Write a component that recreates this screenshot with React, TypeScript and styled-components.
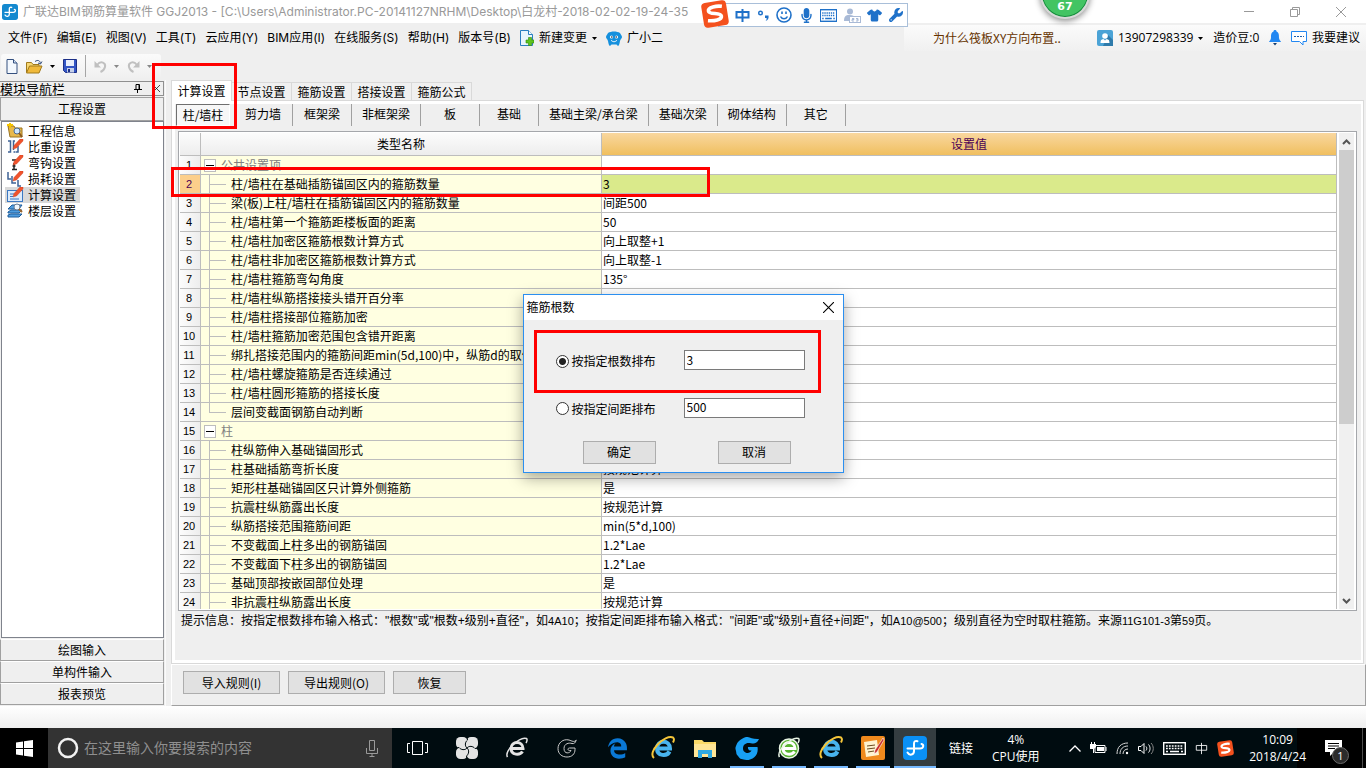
import React, { useState } from "react";
import styled, { createGlobalStyle, css } from "styled-components";
import {
  FaEdgeLegacy,
  FaMicrophone,
  FaShirt,
  FaWrench,
} from "react-icons/fa6";

const song = `"Noto Sans CJK SC", sans-serif`;
const yahei = `"Open Sans", "Noto Sans CJK SC", sans-serif`;
const chrome = `Inter, "Noto Sans CJK SC", sans-serif`;
const arial = `"Liberation Sans", "Noto Sans CJK SC", sans-serif`;

const Global = createGlobalStyle`
  *, *::before, *::after { box-sizing: border-box; }
  html, body { margin: 0; padding: 0; background: #efefef; }
  body { font: 12px/18px ${song}; color: #000; overflow: hidden; }
  button, input { font: inherit; color: inherit; }
  svg { display: block; flex: none; }
`;

const Screen = styled.div`
  position: relative;
  display: flex;
  flex-direction: column;
  height: 100vh;
  min-height: 480px;
  overflow: hidden;
`;

/* ---------- title bar ---------- */

const TitleBar = styled.header`
  display: flex;
  align-items: center;
  gap: 5px;
  height: 23px;
  padding-left: 2px;
  background: #fff;
  color: #999;
  font-family: ${chrome};
`;

const TitleText = styled.h1`
  flex: 1;
  margin: 0;
  font-size: 12px;
  font-weight: 400;
  line-height: 22px;
  white-space: nowrap;
`;

const WindowButton = styled.button`
  display: flex;
  align-items: center;
  justify-content: center;
  width: 46px;
  height: 20px;
  padding: 0;
  border: 0;
  background: none;
`;

const WindowButtons = styled.div`
  display: flex;
  padding-right: 2px;
`;

const ImeBar = styled.div`
  position: absolute;
  top: 3px;
  left: 718px;
  display: flex;
  align-items: center;
  justify-content: space-between;
  width: 190px;
  height: 24px;
  padding: 0 4px 0 16px;
  border: 1px solid #a9bfd9;
  background: #fff;
  color: #1f71c9;
`;

const ImeLogo = styled.div`
  position: absolute;
  top: 0;
  left: 701px;
`;

const Ball = styled.div`
  position: absolute;
  top: -31px;
  left: 1040px;
  display: flex;
  align-items: flex-end;
  justify-content: center;
  width: 50px;
  height: 50px;
  padding-bottom: 2px;
  border: 2px solid #d8d8d8;
  border-radius: 50%;
  background: #43c463;
  box-shadow: inset 0 0 0 1px #14873a, 0 2px 6px rgba(0, 0, 0, 0.45);
  color: #fff;
  font: bold 11px/16px "DejaVu Sans", sans-serif;
`;

/* ---------- menu bar ---------- */

const MenuBar = styled.nav`
  display: flex;
  align-items: center;
  height: 28px;
  padding-top: 2px;
  font-family: ${yahei};
`;

const MenuItems = styled.div`
  display: flex;
  flex: 1;
  align-items: center;
  gap: 9px;
  padding-left: 8px;
  font-family: ${chrome};
`;

const MenuButton = styled.button`
  display: flex;
  align-items: center;
  gap: 5px;
  padding: 0;
  border: 0;
  background: none;
  white-space: nowrap;
`;

const Panel = styled.div`
  display: flex;
  align-items: center;
  height: 26px;
  background: linear-gradient(#fbfbfb, #f0f0f0);
`;

const NoticePanel = styled(Panel)`
  width: 188px;
  padding-left: 29px;
  font-family: ${song};
`;

const NoticeLink = styled.a`
  color: #663300;
  text-decoration: none;
  white-space: nowrap;
`;

const AccountPanel = styled(Panel)`
  gap: 8px;
  width: 274px;
  padding: 0 6px 0 5px;
  justify-content: space-between;
`;

/* ---------- tool bar ---------- */

const ToolBar = styled.div`
  display: flex;
  align-items: flex-start;
  height: 29px;
  padding: 3px 0 0 1px;
`;

const ToolGroup = styled.div`
  display: flex;
  align-items: center;
  gap: 8px;
  width: 160px;
  height: 24px;
  padding-left: 5px;
  border-radius: 3px;
  background: linear-gradient(#fbfbfb, #f0f0f0);
`;

const ToolButton = styled.button`
  display: flex;
  align-items: center;
  gap: 7px;
  padding: 0;
  border: 0;
  background: none;
`;

const ToolDivider = styled.span`
  width: 1px;
  height: 22px;
  background: #a5a5a5;
`;

/* ---------- work area ---------- */

const Work = styled.div`
  display: flex;
  flex: 1;
  min-height: 0;
  gap: 5px;
`;

const Sidebar = styled.aside`
  display: flex;
  flex-direction: column;
  width: 166px;
  padding: 1px 1px 1px 0;
  border-right: 1px solid #fafafa;
`;

const SideHeader = styled.div`
  display: flex;
  align-items: center;
  height: 15px;
  margin-bottom: 1px;
  border: 1px solid #8f8f8f;
  border-left: 0;
  line-height: 13px;
`;

const SideTitle = styled.h2`
  flex: 1;
  margin: 0;
  font-size: 13px;
  font-weight: 400;
  line-height: 13px;
`;

const SideIconButton = styled.button`
  display: flex;
  align-items: center;
  justify-content: flex-end;
  width: 18px;
  height: 13px;
  padding: 0 3px 0 0;
  border: 0;
  background: none;
`;

const SideButton = styled.button<{ $tall?: boolean }>`
  flex: none;
  height: ${(p) => (p.$tall ? 24 : 22)}px;
  padding: 0;
  border: 1px solid #a0a0a0;
  border-top-color: #fff;
  background: #efefef;
  line-height: 18px;
  ${(p) => p.$tall && css`border-top-color: #a0a0a0;`}
`;

const Tree = styled.ul`
  flex: 1;
  margin: 0 0 1px 1px;
  padding: 1px 3px;
  border: 1px solid #7f838c;
  background: #fff;
  list-style: none;
`;

const TreeItem = styled.li`
  display: flex;
  height: 16px;
`;

const TreeButton = styled.button<{ $active?: boolean }>`
  display: flex;
  align-items: center;
  gap: 4px;
  height: 16px;
  padding: 0 4px 0 2px;
  border: 0;
  background: ${(p) => (p.$active ? "#d9d9d9" : "transparent")};
  line-height: 16px;
`;

const Main = styled.main`
  display: flex;
  flex: 1;
  flex-direction: column;
  min-width: 0;
`;

const Tabs = styled.div`
  display: flex;
  align-items: flex-end;
  height: 20px;
`;

const Tab = styled.button<{ $active?: boolean }>`
  width: 60px;
  height: 18px;
  padding: 0;
  border: 1px solid #d9d9d9;
  border-width: 1px 1px 0 0;
  background: #f0f0f0;
  line-height: 17px;
  white-space: nowrap;
  ${(p) =>
    p.$active &&
    css`
      position: relative;
      z-index: 1;
      width: 61px;
      height: 21px;
      margin-bottom: -1px;
      border-left-width: 1px;
      background: #fff;
      line-height: 18px;
    `}
`;

const Page = styled.section`
  display: flex;
  flex: 1;
  min-height: 0;
  margin-right: 2px;
  border: 1px solid #d9d9d9;
`;

const PageInner = styled.div`
  position: relative;
  display: flex;
  flex: 1;
  flex-direction: column;
  min-width: 0;
  padding: 0 4px 0 3px;
  border: 3px solid #fff;
  border-right-width: 2px;
`;

const SubTabs = styled.div`
  display: flex;
  align-items: center;
  height: 22px;
  margin: 0 0 5px -2px;
`;

const SubTab = styled.button<{ $active?: boolean }>`
  min-width: 59px;
  height: 22px;
  padding: 0 10px 2px;
  border: 0;
  border-right: 1px solid #a0a0a0;
  background: none;
  line-height: 18px;
  white-space: nowrap;
  ${(p) =>
    p.$active &&
    css`
      min-width: 54px;
      margin-right: 4px;
      padding: 0 5px;
      border: 1px solid #fff;
      border-top-color: #6f6f6f;
      border-left-color: #6f6f6f;
      background: #f7f7f7;
    `}
`;

const Grid = styled.div`
  display: flex;
  flex: 1;
  min-height: 0;
  gap: 2px;
  padding: 1px 2px 1px 1px;
  border: 1px solid #a5a7ab;
  background: #fff;
  overflow: hidden;
`;

const TableClip = styled.div`
  flex: 1;
  min-width: 0;
  overflow: hidden;
`;

const Table = styled.table`
  width: 100%;
  border-collapse: separate;
  border-spacing: 0;
  table-layout: fixed;
`;

const HeadCell = styled.th<{ $gold?: boolean }>`
  height: 23px;
  padding: 0;
  border: 1px solid #bdbdbd;
  border-width: 0 1px 1px 0;
  background: ${(p) =>
    p.$gold ? "linear-gradient(#f9d79f, #f0bf5f)" : "linear-gradient(#fcfcfc, #ededed)"};
  color: ${(p) => (p.$gold ? "#4b0055" : "#000")};
  font-weight: 400;
  line-height: 20px;
`;

const NumberCell = styled.th<{ $active?: boolean }>`
  height: 19px;
  padding: 0 2px 0 0;
  border: 1px solid #bdbdbd;
  border-width: 0 1px 1px 0;
  background: ${(p) => (p.$active ? "#fccf8b" : "linear-gradient(90deg, #fcfcfc, #ededed)")};
  color: ${(p) => (p.$active ? "#4b0055" : "#000")};
  font-family: ${arial};
  font-size: 11px;
  font-weight: 400;
  line-height: 18px;
`;

const NameCell = styled.td<{ $group?: boolean; $last?: boolean }>`
  position: relative;
  height: 19px;
  padding: 0 0 0 ${(p) => (p.$group ? 3 : 30)}px;
  border: 1px solid #bdbdbd;
  border-width: 0 1px 1px 0;
  background: #ffffe1;
  color: ${(p) => (p.$group ? "#808080" : "#000")};
  line-height: 18px;
  white-space: nowrap;
  overflow: hidden;
  ${(p) =>
    !p.$group &&
    css`
      &::before {
        content: "";
        position: absolute;
        left: 8px;
        top: 0;
        width: 17px;
        height: 10px;
        border-left: 1px solid #bdbdbd;
        border-bottom: 1px solid #bdbdbd;
      }
    `}
  ${(p) =>
    !p.$group &&
    !p.$last &&
    css`
      &::after {
        content: "";
        position: absolute;
        left: 8px;
        top: 0;
        height: 19px;
        border-left: 1px solid #bdbdbd;
      }
    `}
`;

const GroupLine = styled.div`
  display: flex;
  align-items: center;
  gap: 5px;
  height: 18px;
`;

const Toggle = styled.button`
  display: flex;
  align-items: center;
  justify-content: center;
  width: 12px;
  height: 13px;
  padding: 0;
  border: 1px solid #bdbdbd;
  background: #fff;
`;

const ValueCell = styled.td<{ $active?: boolean }>`
  height: 19px;
  padding: 0 0 0 1px;
  border: 1px solid #bdbdbd;
  border-width: 0 1px 1px 0;
  background: ${(p) => (p.$active ? "#daea8b" : "#fff")};
  line-height: 18px;
  white-space: nowrap;
`;

const Scrollbar = styled.div`
  display: flex;
  flex-direction: column;
  width: 15px;
  background: #f0f0f0;
`;

const ScrollArrow = styled.button`
  display: flex;
  align-items: center;
  justify-content: center;
  height: 17px;
  padding: 0;
  border: 0;
  background: none;
`;

const ScrollTrack = styled.div`
  flex: 1;
`;

const ScrollThumb = styled.div`
  height: 62%;
  background: #cdcdcd;
`;

const Hint = styled.p`
  height: 49px;
  margin: 0;
  padding-left: 3px;
  font-family: ${arial};
  line-height: 20px;
  white-space: nowrap;
`;

const HintCode = styled.span`
  font-size: 11px;
`;

const Actions = styled.div`
  display: flex;
  gap: 8px;
  height: 42px;
  padding: 6px 0 0 11px;
  border: 1px solid #a0a0a0;
  border-top-color: #fff;
  border-left-color: #fff;
`;

const PushButton = styled.button<{ $wide?: boolean }>`
  width: ${(p) => (p.$wide ? 97 : 73)}px;
  height: 23px;
  padding: 0;
  border: 1px solid #adadad;
  background: #e1e1e1;
  line-height: 20px;
`;

const DesktopStrip = styled.div`
  height: 22px;
  background: linear-gradient(#fff, #efefef);
`;

/* ---------- red call-outs ---------- */

const Callout = styled.div`
  position: absolute;
  z-index: 2;
  border: 3px solid #f00;
  pointer-events: none;
`;

const TabCallout = styled(Callout)`
  top: 63px;
  left: 152px;
  width: 85px;
  height: 66px;
`;

const RowCallout = styled(Callout)`
  top: 63px;
  left: -4px;
  width: 539px;
  height: 30px;
`;

/* ---------- dialog ---------- */

const DialogLayer = styled.div`
  position: absolute;
  inset: 0;
  z-index: 3;
  display: flex;
  align-items: center;
  justify-content: center;
  padding-bottom: 2px;
`;

const Dialog = styled.form`
  width: 321px;
  padding-bottom: 8px;
  border: 1px solid #2b8ff0;
  background: #efefef;
  box-shadow: 0 5px 14px rgba(0, 0, 0, 0.35);
`;

const DialogTitle = styled.div`
  display: flex;
  align-items: center;
  justify-content: space-between;
  height: 25px;
  margin-bottom: 10px;
  padding: 0 9px 0 3px;
  background: #fff;
`;

const CloseButton = styled.button`
  padding: 0;
  border: 0;
  background: none;
`;

const Option = styled.div<{ $marked?: boolean }>`
  display: flex;
  align-items: center;
  height: ${(p) => (p.$marked ? 63 : 32)}px;
  margin: 0 0 0 10px;
  width: 287px;
  padding-left: 19px;
  border: 3px solid ${(p) => (p.$marked ? "#f00" : "transparent")};
`;

const OptionLabel = styled.label`
  display: flex;
  align-items: center;
  gap: 3px;
  width: 128px;
`;

const Radio = styled.input`
  appearance: none;
  width: 13px;
  height: 13px;
  margin: 0;
  border: 1px solid #333;
  border-radius: 50%;
  background: #fff;
  &:checked {
    background: radial-gradient(circle, #222 0 3px, #fff 4px);
  }
`;

const Field = styled.input`
  width: 121px;
  height: 20px;
  margin-bottom: 2px;
  padding: 0 2px 2px;
  border: 1px solid #7a7a7a;
  border-radius: 0;
  background: #fff;
  outline: 0;
`;

const DialogButtons = styled.div`
  display: flex;
  gap: 62px;
  padding: 16px 0 0 59px;
`;

/* ---------- task bar ---------- */

const TaskBar = styled.footer`
  display: flex;
  height: 40px;
  background: linear-gradient(to left, #000 69px, #000c10 69px);
  color: #fff;
  font-family: ${yahei};
`;

const StartButton = styled.button`
  display: flex;
  align-items: center;
  justify-content: center;
  width: 48px;
  padding: 0;
  border: 0;
  background: #000;
`;

const SearchBox = styled.label`
  display: flex;
  align-items: center;
  gap: 5px;
  width: 344px;
  padding: 0 14px 0 9px;
  background: #333;
`;

const SearchInput = styled.input`
  flex: 1;
  min-width: 0;
  padding: 0;
  border: 0;
  background: none;
  outline: 0;
  font-size: 14px;
  line-height: 20px;
  &::placeholder {
    color: #8f8f8f;
    opacity: 1;
  }
`;

const TaskButton = styled.button<{ $size?: "wide"; $state?: "open" | "active" }>`
  display: flex;
  align-items: center;
  justify-content: center;
  width: ${(p) => (p.$size ? 50 : 42)}px;
  padding: 0;
  border: 0;
  background: ${(p) => (p.$state === "active" ? "#343d40" : "none")};
  ${(p) =>
    p.$state &&
    css`
      background-image: linear-gradient(#76b9ff, #76b9ff);
      background-repeat: no-repeat;
      background-position: center bottom;
      background-size: ${p.$state === "active" ? "100%" : "34px"} 2px;
    `}
`;

const TrayText = styled.div<{ $gap: number }>`
  align-self: center;
  margin-left: ${(p) => p.$gap}px;
  line-height: 17px;
  text-align: center;
  white-space: nowrap;
`;

const Tray = styled.div`
  display: flex;
  flex: 1;
  align-items: center;
  justify-content: flex-end;
  gap: 9px;
  padding-right: 4px;
`;

const Notifications = styled.button`
  position: relative;
  display: flex;
  align-items: center;
  justify-content: center;
  width: 53px;
  padding: 0 6px 0 0;
  border: 0;
  border-right: 1px solid #4c4c4c;
  margin-right: 3px;
  background: #000;
`;

const Badge = styled.span`
  position: absolute;
  left: 22px;
  top: 19px;
  width: 17px;
  height: 17px;
  border: 1px solid #6a6a6a;
  border-radius: 50%;
  background: #2b2b2b;
  font-size: 11px;
  line-height: 15px;
`;

/* ---------- drawings ---------- */

const Arrow = ({ color = "#000" }: { color?: string }) => (
  <svg width="5" height="3" viewBox="0 0 5 3">
    <path d="M0 0h5L2.5 3z" fill={color} />
  </svg>
);

const AppLogo = ({ size, color = "#1489cf" }: { size: number; color?: string }) => (
  <svg width={size} height={size} viewBox="0 0 24 24">
    <rect width="24" height="24" rx="4" fill={color} />
    <path
      d="M14.500 5.200c-2.200-.8-3.500.3-3.500 2.300V15c0 4-4.500 5-6.500 1.500M4.500 12.500H17c4 0 4-4 1.500-4.500"
      fill="none"
      stroke="#fff"
      strokeWidth="2"
      strokeLinecap="round"
    />
  </svg>
);

const SogouLogo = ({ size }: { size: number }) => (
  <svg width={size} height={size} viewBox="0 0 28 28">
    <g transform="rotate(-9 14 14)">
      <rect x="1.500" y="1.500" width="25" height="25" rx="4" fill="#f4511e" />
      <path
        d="M22 7.500c-5-1.500-14-1.500-14 2.500 0 4.500 12 2.500 12 7 0 4-8 4-14 2.500"
        fill="none"
        stroke="#fff"
        strokeWidth="3.600"
      />
    </g>
  </svg>
);

const Smile = () => (
  <svg width="16" height="16" viewBox="0 0 16 16" fill="none" stroke="currentColor" strokeWidth="1.600">
    <circle cx="8" cy="8" r="7" />
    <path d="M4.500 9.500c1.500 3 5.500 3 7 0M6 4.500v2.500M10 4.500v2.500" />
  </svg>
);

const Keyboard = ({ width = 17 }: { width?: number }) => (
  <svg width={width} height="13" viewBox="0 0 23 13" preserveAspectRatio="none" fill="none" stroke="currentColor">
    <rect x="0.700" y="0.700" width="21.600" height="11.600" strokeWidth="1.400" />
    <path d="M3 4h17M3 6.500h17" strokeWidth="1.400" strokeDasharray="1.800 1.100" />
    <path d="M3 9.500h2M7 9.500h9M18 9.500h2" strokeWidth="1.400" />
  </svg>
);

const Zhong = ({ size = 15, weight = 2 }: { size?: number; weight?: number }) => (
  <svg width={size} height={size} viewBox="0 0 15 15" fill="none" stroke="currentColor" strokeWidth={weight}>
    <path d="M1.500 4h12v5.500h-12zM7.500 1v13" />
  </svg>
);

const ImePunctuation = () => (
  <svg width="13" height="13" viewBox="0 0 13 13">
    <circle cx="3.500" cy="4" r="1.800" fill="none" stroke="currentColor" strokeWidth="1.400" />
    <path d="M8 6.500h3.500c.5 3-.5 4.500-3 5.500 1-1 1.300-2 1-3H8z" fill="currentColor" />
  </svg>
);

const ImePerson = () => (
  <svg width="17" height="15" viewBox="0 0 17 15">
    <circle cx="6" cy="3.500" r="3" fill="#a9bad6" />
    <path d="M0 13c0-6 3-6 6-6s4 1 5 2v4z" fill="#a9bad6" />
    <rect x="5.500" y="8.500" width="11" height="6" fill="#fff" stroke="#a9bad6" />
    <path d="M8 10.500h2v1H8v1.500h2M12 10.500h2v2.500h-2M12.500 11.700h1.500" fill="none" stroke="#a9bad6" />
  </svg>
);

const NewChange = () => (
  <svg width="14" height="16" viewBox="0 0 14 16">
    <path d="M.5.500h8l4 4v11H.500z" fill="#e9f5fd" stroke="#2a7fc1" />
    <path d="M8.500.500v4h4" fill="#fff" stroke="#2a7fc1" />
    <path d="M8.500 7.500h3v2.500H14v3h-2.500v2.500h-3V13H6v-3h2.500z" fill="#5fc41f" stroke="#2f8a0c" strokeWidth=".6" />
  </svg>
);

const Mascot = () => (
  <svg width="16" height="15" viewBox="0 0 16 15">
    <path d="M2 2c3-2 9-2 12 0 .5 1.500 2 2.500 2 4s-1.500 2-2 4c-.5 3-1 4.500-2 5l-1.500-1.500h-5L4 15c-1-.5-1.500-2-2-5-.5-2-2-2.500-2-4s1.500-2.500 2-4z" fill="#1590dd" />
    <circle cx="5.500" cy="6" r="1.600" fill="#fff" />
    <circle cx="10.500" cy="6" r="1.600" fill="#fff" />
    <circle cx="5.800" cy="6" r=".8" fill="#123" />
    <circle cx="10.200" cy="6" r=".8" fill="#123" />
    <path d="M5 9.200c2 2 4 2 6 0" fill="none" stroke="#fff" />
  </svg>
);

const UserIcon = () => (
  <svg width="16" height="16" viewBox="0 0 16 16">
    <rect width="16" height="16" rx="2" fill="#4ba3d6" />
    <path d="M11 5l5 5v6H6z" fill="#2f7bab" />
    <circle cx="8" cy="6" r="2.800" fill="#fff" />
    <path d="M3.500 13c0-4 2-3.500 3-4L8 10.500 9.500 9c1 .5 3 0 3 4z" fill="#fff" />
  </svg>
);

const Bell = () => (
  <svg width="12" height="16" viewBox="0 0 12 16">
    <path d="M6 0c1 0 1.500.5 1.500 1.500C10 2.500 10 5 10 8c0 2 2 3 2 4H0c0-1 2-2 2-4 0-3 0-5.500 2.500-6.500C4.500.5 5 0 6 0z" fill="#2388f2" />
    <path d="M4 13h4l-2 2.500z" fill="#123c70" />
  </svg>
);

const Chat = () => (
  <svg width="16" height="16" viewBox="0 0 16 16" fill="none" stroke="#2388f2">
    <path d="M.5 1.500h15v10h-3.500v3.500l-3.500-3.500H.500z" fill="#fff" />
    <path d="M3 6.500h10" stroke="#1b5faf" strokeDasharray="2 1" />
  </svg>
);

const NewFile = () => (
  <svg width="12" height="15" viewBox="0 0 12 15">
    <path d="M1 .5h6.500l3.500 3.500v10.500H1z" fill="#f3f8fe" stroke="#35507f" />
    <path d="M7.500.500v3.500H11" fill="#cfe0f5" stroke="#35507f" />
  </svg>
);

const OpenFolder = () => (
  <svg width="17" height="15" viewBox="0 0 17 15">
    <path d="M.5 13.500V3.500h5l1.500 2h6v2" fill="#f7d774" stroke="#a07a1c" />
    <path d="M.5 14l3-7H16l-3 7z" fill="#f0b93a" stroke="#a07a1c" />
    <path d="M9 2.500c3-2 5-1 5.500 2M16 2.500l-1.500 2.500-2.500-1" fill="none" stroke="#35507f" />
  </svg>
);

const Save = () => (
  <svg width="14" height="14" viewBox="0 0 14 14">
    <path d="M.5.500h13v13h-11l-2-2z" fill="#3355c4" stroke="#1c2f86" />
    <rect x="3" y="1" width="8" height="6" fill="#e8eefb" />
    <rect x="4" y="9" width="7" height="4.500" fill="#c6d0e8" />
    <rect x="5" y="10" width="2" height="3" fill="#1c2f86" />
  </svg>
);

const Undo = ({ flip }: { flip?: boolean }) => (
  <svg width="13" height="13" viewBox="0 0 13 13">
    <g transform={flip ? "matrix(-1 0 0 1 13 0)" : undefined}>
      <path d="M3 5c4-5 9-2 8 2-.5 2-2 4-4.500 5" fill="none" stroke="#c0c0c0" strokeWidth="2" />
      <path d="M.5 1v6.500H7z" fill="#c0c0c0" />
    </g>
  </svg>
);

const Pencil = () => <path d="M6 10l1-3.500L13 0h3v2L9.500 9z" fill="#f0532d" stroke="#c23a1a" strokeWidth=".4" />;

const treeDrawings: Record<string, React.ReactNode> = {
  info: (
    <>
      <path d="M1 3h6l1 2h7v9H3z" fill="#e8b84b" stroke="#9b7420" />
      <path d="M0 2h6M3 0v5" stroke="#f5c400" strokeWidth="2" />
      <circle cx="10" cy="8" r="3" fill="#cfe6fb" stroke="#4a6a95" />
      <path d="M12 10l3 4" stroke="#8a5a20" strokeWidth="2" />
    </>
  ),
  weight: (
    <>
      <path d="M1 2h2.500v11H1M8 2H6.500v9M6.500 13H8M11 7v6H8.500" fill="none" stroke="#3f6396" strokeWidth="1.500" />
      <Pencil />
    </>
  ),
  hook: (
    <>
      <path d="M5 5h4M7 8v6M5 14.500h5M5.500 11h3" fill="none" stroke="#222" strokeWidth="1.500" />
      <Pencil />
    </>
  ),
  loss: (
    <>
      <path d="M1 1v7h3M5 5v7h4M11 9v6h3" fill="none" stroke="#3f6396" strokeWidth="1.500" />
      <Pencil />
    </>
  ),
  calc: (
    <>
      <rect x=".5" y="3.500" width="15" height="11" fill="#dcebfb" stroke="#3b78c2" />
      <path d="M3 7h4M3 9.500h3M3 12h9" stroke="#3b78c2" />
      <Pencil />
    </>
  ),
  floor: (
    <>
      <path d="M1 6l4-4h10l-3 4zM1 9l3-2h11l-3 3H1zM1 12l3-1h11l-3 3H1z" fill="#4f9ee0" stroke="#1d5c9c" />
      <circle cx="10" cy="4" r="3" fill="#eef6fd" stroke="#6a7d95" />
      <path d="M12 6l3 3" stroke="#a0672a" strokeWidth="2" />
    </>
  ),
};

const Cross = ({ size, color }: { size: number; color: string }) => (
  <svg width={size} height={size} viewBox="0 0 10 10" stroke={color}>
    <path d="M0 0l10 10M10 0L0 10" />
  </svg>
);

const Chevron = ({ down }: { down?: boolean }) => (
  <svg width="9" height="6" viewBox="0 0 9 6" fill="none" stroke="#555" strokeWidth="2">
    <path d={down ? "M1 1l3.500 3.500L8 1" : "M1 5l3.500-3.500L8 5"} />
  </svg>
);

const TaskView = () => (
  <svg width="21" height="14" viewBox="0 0 21 14" fill="none" stroke="#fff">
    <path d="M5.500.500h10v13h-10zM3 2.500H.500v9H3M18 2.500h2.500v9H18" />
  </svg>
);

const Pinwheel = () => (
  <svg width="22" height="22" viewBox="0 0 22 22">
    <g fill="#e4e4e4">
      <rect x="0" y="0" width="11.500" height="11.500" rx="4.500" />
      <rect x="10.500" y="0" width="11.500" height="11.500" rx="4.500" />
      <rect x="0" y="10.500" width="11.500" height="11.500" rx="4.500" />
      <rect x="10.500" y="10.500" width="11.500" height="11.500" rx="4.500" />
      <circle cx="11" cy="11" r="4" />
    </g>
    <g fill="none" stroke="#000c10">
      {[0, 90, 180, 270].map((a) => (
        <path key={a} transform={`rotate(${a} 11 11)`} d="M11 11C8.500 9 9 5 11.500 3L11 0" />
      ))}
    </g>
  </svg>
);

const RingLetter = ({ color, ring, back }: { color: string; ring: string; back?: string }) => (
  <svg width="22" height="22" viewBox="0 0 22 22" fill="none">
    {back && <circle cx="11" cy="11.500" r="9.500" fill={back} stroke="#e9f5e5" strokeWidth="1.500" />}
    <path d="M5 11.500h12c0-8-12-8-12 0 0 7 9 7 11.500 3" stroke={color} strokeWidth="3" />
    <path d="M1.500 20C-2 14 14-1 20.500 1.500c1 .5.5 3-.5 4.500" stroke={ring} strokeWidth="1.500" />
  </svg>
);

const SwirlOutline = () => (
  <svg width="20" height="19" viewBox="0 0 20 19" fill="none" stroke="#c9c9c9" strokeLinecap="round">
    <path d="M19 1.500c-2 2-4 .5-7-.5C6-.5 1 4 1 9.500S5 18 10 18s8-3 8-7.500V9h-5.500c-2 0-2 2.500 0 2.500h1.500c-1 3-7 4-7-2 0-5 5-6 8-5 2 .5 3.500-.5 4-3z" />
  </svg>
);

const Swirl = () => (
  <svg width="24" height="23" viewBox="0 0 24 23">
    <path
      d="M24 2c-2 4.500-5 5-8 4.200C11 5 8 7.500 8 11.500c0 5 7 6 8.500 2-2 .5-4-1-3.500-3.500h9.500C24 18 18 23 11.500 23 9 23 8 22 6.500 22 5 22 4 20 3 19c-2-1.500-1.500-3-2-5s-1-3 0-5 1-3.500 3-5 4-3.500 7-4c3.500-.5 6 2.500 13 2z"
      fill="#18a0f4"
    />
  </svg>
);

const IeColor = () => (
  <svg width="25" height="24" viewBox="0 0 25 24" fill="none">
    <path d="M6 12.500h13c0-9-13-9-13 0 0 8 10 8 12.500 3" stroke="#48b4ee" strokeWidth="4" />
    <path d="M3 22C-4 16 14-2 22 1.500c1.500 1 1 3 0 5" stroke="#f5c63a" strokeWidth="2" />
  </svg>
);

const Explorer = () => (
  <svg width="22" height="19" viewBox="0 0 22 19">
    <path d="M0 1h8l2 2h12v15H0z" fill="#fbd968" />
    <path d="M0 5h22v13H0z" fill="#ffe596" />
    <path d="M4 11h14v8h-4v-4H8v4H4z" fill="#2fa8e0" />
  </svg>
);

const Notes = () => (
  <svg width="24" height="24" viewBox="0 0 24 24">
    <rect width="24" height="24" rx="2" fill="#f08a1d" />
    <path d="M3 6l13-2 2 15-13 2z" fill="#fff3d0" />
    <path d="M6 10l8-1M6 13l8-1M7 16l6-1" stroke="#6a4a20" />
    <path d="M22 2l-8 12-1 4 3-2 7-12z" fill="#c9302c" stroke="#fff" strokeWidth=".6" />
  </svg>
);

const WindowsLogo = () => (
  <svg width="17" height="17" viewBox="0 0 17 17" fill="#fff">
    <path d="M0 2.500l7-1V8H0zM8 1.300L17 0v8H8zM0 9h7v6.500l-7-1zM8 9h9v8l-9-1.300z" />
  </svg>
);

const SearchRing = () => (
  <svg width="22" height="22" viewBox="0 0 22 22">
    <circle cx="11" cy="11" r="9" fill="none" stroke="#f2f2f2" strokeWidth="2.500" />
  </svg>
);

const SearchMic = () => (
  <svg width="12" height="17" viewBox="0 0 12 17" fill="none" stroke="#9a9a9a">
    <path d="M3.500.500h5v10h-5zM.5 8v5.500h11V8M6 13.500v3M3.500 16.500h5" />
  </svg>
);

const TrayUp = () => (
  <svg width="12" height="7" viewBox="0 0 12 7" fill="none" stroke="#fff" strokeWidth="1.300">
    <path d="M.5 6.500L6 1l5.500 5.500" />
  </svg>
);

const Battery = () => (
  <svg width="17" height="12" viewBox="0 0 17 12">
    <path d="M5 3.500h10v7H5zM16 5v4" stroke="#fff" fill="none" />
    <path d="M7 5h7v4H7zM0 2h6v3L4 7v4H3V7H0zM1 0h1v2H1zM4 0h1v2H4z" fill="#fff" />
  </svg>
);

const Wifi = () => (
  <svg width="13" height="13" viewBox="0 0 13 13" fill="none" stroke="#d8d8d8">
    <path d="M1 12C1 5 5 1 12 1M4 12c0-5 3-8 8-8M7 12c0-3 2-5 5-5" />
    <circle cx="11" cy="11" r="1.200" fill="#fff" stroke="none" />
  </svg>
);

const Volume = () => (
  <svg width="16" height="13" viewBox="0 0 16 13" fill="none" stroke="#fff">
    <path d="M.5 4.500H3l3-3v10l-3-3H.500zM8 4.500c1 1 1 3 0 4M10.500 2.500c2 2 2 6 0 8" />
    <path d="M13 1c3 3 3 8 0 11" stroke="#888" />
  </svg>
);

const ActionCenter = () => (
  <svg width="17" height="16" viewBox="0 0 17 16">
    <path d="M0 0h17v12H9l-4 4v-4H0z" fill="#fff" />
    <path d="M3 3.500h11M3 6h11M3 8.500h7" stroke="#000" />
  </svg>
);

/* ---------- data ---------- */

const menus = ["文件(F)", "编辑(E)", "视图(V)", "工具(T)", "云应用(Y)", "BIM应用(I)", "在线服务(S)", "帮助(H)", "版本号(B)"];

const treeItems = [
  ["info", "工程信息"],
  ["weight", "比重设置"],
  ["hook", "弯钩设置"],
  ["loss", "损耗设置"],
  ["calc", "计算设置"],
  ["floor", "楼层设置"],
];

const tabs = ["计算设置", "节点设置", "箍筋设置", "搭接设置", "箍筋公式"];
const subTabs = ["柱/墙柱", "剪力墙", "框架梁", "非框架梁", "板", "基础", "基础主梁/承台梁", "基础次梁", "砌体结构", "其它"];

type Row = { name: string; value?: string; group?: boolean; last?: boolean };

const rows: Row[] = [
  { name: "公共设置项", group: true },
  { name: "柱/墙柱在基础插筋锚固区内的箍筋数量", value: "3" },
  { name: "梁(板)上柱/墙柱在插筋锚固区内的箍筋数量", value: "间距500" },
  { name: "柱/墙柱第一个箍筋距楼板面的距离", value: "50" },
  { name: "柱/墙柱加密区箍筋根数计算方式", value: "向上取整+1" },
  { name: "柱/墙柱非加密区箍筋根数计算方式", value: "向上取整-1" },
  { name: "柱/墙柱箍筋弯勾角度", value: "135°" },
  { name: "柱/墙柱纵筋搭接接头错开百分率", value: "" },
  { name: "柱/墙柱搭接部位箍筋加密", value: "" },
  { name: "柱/墙柱箍筋加密范围包含错开距离", value: "" },
  { name: "绑扎搭接范围内的箍筋间距min(5d,100)中，纵筋d的取值", value: "" },
  { name: "柱/墙柱螺旋箍筋是否连续通过", value: "" },
  { name: "柱/墙柱圆形箍筋的搭接长度", value: "" },
  { name: "层间变截面钢筋自动判断", value: "", last: true },
  { name: "柱", group: true },
  { name: "柱纵筋伸入基础锚固形式", value: "" },
  { name: "柱基础插筋弯折长度", value: "按规范计算" },
  { name: "矩形柱基础锚固区只计算外侧箍筋", value: "是" },
  { name: "抗震柱纵筋露出长度", value: "按规范计算" },
  { name: "纵筋搭接范围箍筋间距", value: "min(5*d,100)" },
  { name: "不变截面上柱多出的钢筋锚固", value: "1.2*Lae" },
  { name: "不变截面下柱多出的钢筋锚固", value: "1.2*Lae" },
  { name: "基础顶部按嵌固部位处理", value: "是" },
  { name: "非抗震柱纵筋露出长度", value: "按规范计算" },
];

export default function App() {
  const [mode, setMode] = useState<"count" | "spacing">("count");
  const [count, setCount] = useState("3");
  const [spacing, setSpacing] = useState("500");

  return (
    <Screen>
      <Global />
      <TitleBar>
        <AppLogo size={16} />
        <TitleText>
          广联达BIM钢筋算量软件 GGJ2013 - [C:\Users\Administrator.PC-20141127NRHM\Desktop\白龙村-2018-02-02-19-24-35
        </TitleText>
        <WindowButtons>
          <WindowButton aria-label="最小化">
            <svg width="10" height="1" viewBox="0 0 10 1"><path d="M0 .5h10" stroke="#999" /></svg>
          </WindowButton>
          <WindowButton aria-label="还原">
            <svg width="10" height="10" viewBox="0 0 10 10" fill="none" stroke="#999">
              <path d="M.5 2.500h7v7h-7zM2.500 2.500v-2h7v7h-2" />
            </svg>
          </WindowButton>
          <WindowButton aria-label="关闭"><Cross size={10} color="#999" /></WindowButton>
        </WindowButtons>
      </TitleBar>

      <MenuBar>
        <MenuItems>
          {menus.map((m) => (
            <MenuButton key={m}>{m}</MenuButton>
          ))}
          <MenuButton><NewChange />新建变更<Arrow /></MenuButton>
          <MenuButton><Mascot />广小二</MenuButton>
        </MenuItems>
        <NoticePanel>
          <NoticeLink href="#notice">为什么筏板XY方向布置..</NoticeLink>
        </NoticePanel>
        <AccountPanel>
          <MenuButton><UserIcon />13907298339 <Arrow /></MenuButton>
          <MenuButton>造价豆:0</MenuButton>
          <MenuButton aria-label="消息"><Bell /></MenuButton>
          <MenuButton><Chat />我要建议</MenuButton>
        </AccountPanel>
      </MenuBar>

      <ToolBar>
        <ToolGroup>
          <ToolButton aria-label="新建"><NewFile /></ToolButton>
          <ToolButton aria-label="打开"><OpenFolder /><Arrow /></ToolButton>
          <ToolButton aria-label="保存"><Save /></ToolButton>
          <ToolDivider />
          <ToolButton aria-label="撤销"><Undo /><Arrow color="#888" /></ToolButton>
          <ToolButton aria-label="恢复"><Undo flip /><Arrow color="#888" /></ToolButton>
        </ToolGroup>
      </ToolBar>

      <Work>
        <Sidebar>
          <SideHeader>
            <SideTitle>模块导航栏</SideTitle>
            <SideIconButton aria-label="固定">
              <svg width="8" height="9" viewBox="0 0 8 9" fill="none" stroke="#000">
                <path d="M2 5.500V.500h3.500v5M5 1v4.500M0 5.500h8M3.500 5.500V9" />
              </svg>
            </SideIconButton>
            <SideIconButton aria-label="关闭导航栏"><Cross size={7} color="#000" /></SideIconButton>
          </SideHeader>
          <SideButton $tall>工程设置</SideButton>
          <Tree>
            {treeItems.map(([icon, label]) => (
              <TreeItem key={icon}>
                <TreeButton $active={icon === "calc"}>
                  <svg width="17" height="16" viewBox="0 0 17 16">{treeDrawings[icon]}</svg>
                  {label}
                </TreeButton>
              </TreeItem>
            ))}
          </Tree>
          <SideButton>绘图输入</SideButton>
          <SideButton>单构件输入</SideButton>
          <SideButton>报表预览</SideButton>
        </Sidebar>

        <Main>
          <Tabs role="tablist">
            {tabs.map((t, i) => (
              <Tab key={t} role="tab" aria-selected={i === 0} $active={i === 0}>{t}</Tab>
            ))}
          </Tabs>
          <Page>
            <PageInner>
              <SubTabs>
                {subTabs.map((t, i) => (
                  <SubTab key={t} $active={i === 0}>{t}</SubTab>
                ))}
              </SubTabs>
              <Grid>
                <TableClip>
                  <Table>
                    <colgroup>
                      <col style={{ width: 21 }} />
                      <col style={{ width: 401 }} />
                      <col />
                    </colgroup>
                    <thead>
                      <tr>
                        <HeadCell />
                        <HeadCell scope="col">类型名称</HeadCell>
                        <HeadCell scope="col" $gold>设置值</HeadCell>
                      </tr>
                    </thead>
                    <tbody>
                      {rows.map((r, i) => (
                        <tr key={i}>
                          <NumberCell scope="row" $active={i === 1}>{i + 1}</NumberCell>
                          <NameCell $group={r.group} $last={r.last}>
                            {r.group ? (
                              <GroupLine>
                                <Toggle aria-label="折叠">
                                  <svg width="8" height="1" viewBox="0 0 8 1"><path d="M0 .5h8" stroke="#000" /></svg>
                                </Toggle>
                                {r.name}
                              </GroupLine>
                            ) : (
                              r.name
                            )}
                          </NameCell>
                          <ValueCell $active={i === 1}>{r.value}</ValueCell>
                        </tr>
                      ))}
                    </tbody>
                  </Table>
                </TableClip>
                <Scrollbar>
                  <ScrollArrow aria-label="向上滚动"><Chevron /></ScrollArrow>
                  <ScrollTrack><ScrollThumb /></ScrollTrack>
                  <ScrollArrow aria-label="向下滚动"><Chevron down /></ScrollArrow>
                </Scrollbar>
              </Grid>
              <Hint>
                提示信息：按指定根数排布输入格式："根数"或"根数+级别+直径"，如<HintCode>4A10</HintCode>；按指定间距排布输入格式："间距"或"级别+直径+间距"，如<HintCode>A10@500</HintCode>；级别直径为空时取柱箍筋。来源<HintCode>11G101-3</HintCode>第<HintCode>59</HintCode>页。
              </Hint>
              <RowCallout />
            </PageInner>
          </Page>
          <Actions>
            <PushButton $wide>导入规则(I)</PushButton>
            <PushButton $wide>导出规则(O)</PushButton>
            <PushButton>恢复</PushButton>
          </Actions>
        </Main>
      </Work>
      <DesktopStrip />

      <TaskBar>
        <StartButton aria-label="开始"><WindowsLogo /></StartButton>
        <SearchBox>
          <SearchRing />
          <SearchInput aria-label="搜索" placeholder="在这里输入你要搜索的内容" />
          <SearchMic />
        </SearchBox>
        <TaskButton $size="wide" aria-label="任务视图"><TaskView /></TaskButton>
        <TaskButton $size="wide" aria-label="风车"><Pinwheel /></TaskButton>
        <TaskButton $size="wide" aria-label="浏览器"><RingLetter color="#e4e4e4" ring="#e4e4e4" /></TaskButton>
        <TaskButton $size="wide" aria-label="旋风"><SwirlOutline /></TaskButton>
        <TaskButton $size="wide" aria-label="Edge"><FaEdgeLegacy size={21} color="#0a78d6" /></TaskButton>
        <TaskButton aria-label="Internet Explorer"><IeColor /></TaskButton>
        <TaskButton aria-label="文件资源管理器"><Explorer /></TaskButton>
        <TaskButton $state="open" aria-label="G"><Swirl /></TaskButton>
        <TaskButton $state="open" aria-label="安全浏览器"><RingLetter color="#fff" ring="#e9f5e5" back="#58b431" /></TaskButton>
        <TaskButton $state="open" aria-label="IE"><IeColor /></TaskButton>
        <TaskButton $state="open" aria-label="便笺"><Notes /></TaskButton>
        <TaskButton $state="active" aria-label="广联达"><AppLogo size={24} color="#0a90f5" /></TaskButton>
        <TrayText $gap={13}>链接</TrayText>
        <TrayText $gap={19}>4%<br />CPU使用</TrayText>
        <Tray>
          <TrayUp />
          <Battery />
          <Wifi />
          <Volume />
          <Keyboard width={23} />
          <Zhong size={13} weight={1} />
          <SogouLogo size={17} />
          <TrayText $gap={6}>10:09<br />2018/4/24</TrayText>
        </Tray>
        <Notifications aria-label="通知"><ActionCenter /><Badge>1</Badge></Notifications>
      </TaskBar>

      <ImeBar>
        <Zhong />
        <ImePunctuation />
        <Smile />
        <FaMicrophone size={15} />
        <Keyboard />
        <ImePerson />
        <FaShirt size={15} />
        <FaWrench size={14} />
      </ImeBar>
      <ImeLogo><SogouLogo size={28} /></ImeLogo>
      <Ball>67</Ball>
      <TabCallout />

      <DialogLayer>
        <Dialog role="dialog" aria-label="箍筋根数" onSubmit={(e) => e.preventDefault()}>
          <DialogTitle>
            箍筋根数
            <CloseButton type="button" aria-label="关闭对话框"><Cross size={11} color="#000" /></CloseButton>
          </DialogTitle>
          <Option $marked>
            <OptionLabel>
              <Radio type="radio" name="mode" checked={mode === "count"} onChange={() => setMode("count")} />
              按指定根数排布
            </OptionLabel>
            <Field aria-label="根数" value={count} onChange={(e) => setCount(e.target.value)} />
          </Option>
          <Option>
            <OptionLabel>
              <Radio type="radio" name="mode" checked={mode === "spacing"} onChange={() => setMode("spacing")} />
              按指定间距排布
            </OptionLabel>
            <Field aria-label="间距" value={spacing} onChange={(e) => setSpacing(e.target.value)} />
          </Option>
          <DialogButtons>
            <PushButton type="submit">确定</PushButton>
            <PushButton type="button">取消</PushButton>
          </DialogButtons>
        </Dialog>
      </DialogLayer>
    </Screen>
  );
}
